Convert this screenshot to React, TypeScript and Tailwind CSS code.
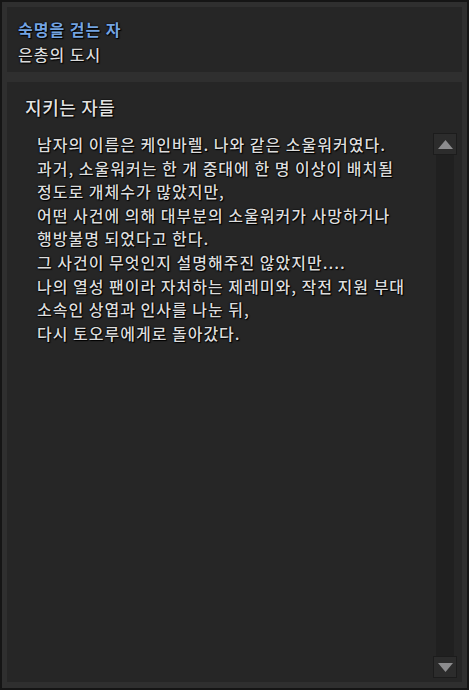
import React from 'react';

const lines = [
  '남자의 이름은 케인바렐. 나와 같은 소울워커였다.',
  '과거, 소울워커는 한 개 중대에 한 명 이상이 배치될',
  '정도로 개체수가 많았지만,',
  '어떤 사건에 의해 대부분의 소울워커가 사망하거나',
  '행방불명 되었다고 한다.',
  '그 사건이 무엇인지 설명해주진 않았지만....',
  '나의 열성 팬이라 자처하는 제레미와, 작전 지원 부대',
  '소속인 상엽과 인사를 나눈 뒤,',
  '다시 토오루에게로 돌아갔다.',
];

const font = "font-['Noto_Sans_CJK_KR','Noto_Sans',sans-serif]";
const shadow = '[text-shadow:0_0_2px_#000,0_0_1px_#000,1px_1px_1px_#000]';

function ScrollArrow({ down }: { down?: boolean }) {
  return (
    <div className="w-[24px] h-[22px] bg-[#2c2c2c] border border-[#1c1c1c] flex items-center justify-center">
      <svg width="15" height="9" viewBox="0 0 15 9">
        <path d={down ? 'M0 0H15L7.5 9Z' : 'M0 9H15L7.5 0Z'} fill="#8c8c8e" />
      </svg>
    </div>
  );
}

export default function App() {
  return (
    <div className={`w-[469px] h-[690px] bg-[#151515] p-[2px] ${font}`}>
      <div className="w-full h-full bg-[#2f2f2f] flex flex-col gap-[10px] pt-[5px] pb-[6px] px-[5px]">
        {/* Header */}
        <div className="h-[65px] bg-[#262626] pl-[11px] pt-[10px] flex flex-col">
          <div className={`text-[16px] leading-[25px] tracking-[1px] font-semibold text-[#74a3e0] ${shadow}`}>
            숙명을 걷는 자
          </div>
          <div className={`text-[16px] leading-[25px] tracking-[1px] font-medium text-[#dadada] ${shadow}`}>
            은총의 도시
          </div>
        </div>

        {/* Body */}
        <div className="flex-1 bg-[#262626] flex flex-col min-h-0">
          <div className={`pl-[18px] pt-[13px] text-[18px] leading-[24px] tracking-[0.6px] font-medium text-[#e2e2e2] ${shadow}`}>
            지키는 자들
          </div>
          <div className="flex flex-1 min-h-0 mt-[14px] pb-[4px] pr-[5px]">
            <div className={`flex-1 pl-[30px] text-[16px] leading-[23.6px] tracking-[1px] font-medium text-[#dcdcdc] ${shadow}`}>
              {lines.map((l) => (
                <div key={l}>{l}</div>
              ))}
            </div>
            <div className="flex flex-col items-center w-[24px]">
              <ScrollArrow />
              <div className="flex-1 w-[18px] bg-[#202020]" />
              <ScrollArrow down />
            </div>
          </div>
        </div>
      </div>
    </div>
  );
}
